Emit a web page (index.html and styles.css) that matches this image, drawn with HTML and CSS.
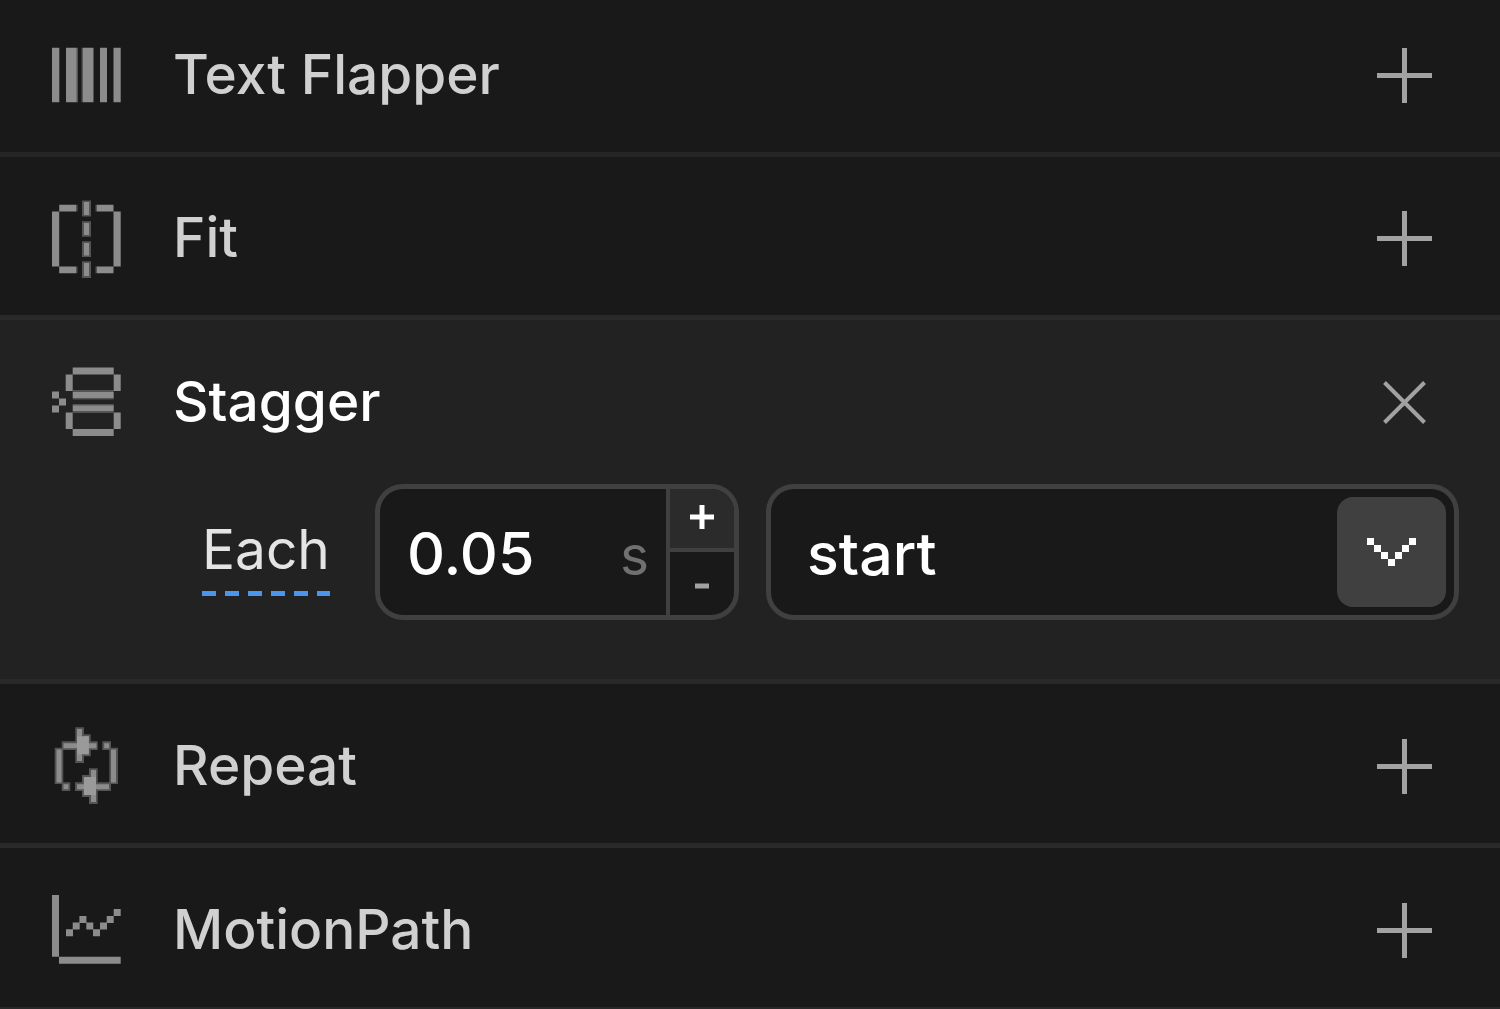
FILE: index.html
```html
<!DOCTYPE html>
<html lang="en">
<head>
<meta charset="utf-8">
<title>Effects</title>
<link rel="stylesheet" href="styles.css">
</head>
<body>
<main class="panel">
  <section class="row row-first">
    <header class="row-head">
      <svg class="icon" viewBox="0 0 80 80" aria-hidden="true">
        <path class="fringe" d="M30 12.7h2v54.6h-2zM35.5 12.7h2v54.6h-2z"/>
        <path d="M6 12.7h7.3v54.6H6zM20 12.7h10.5v54.6H20zM37 12.7h10.5v54.6H37zM54 12.7h7v54.6h-7zM67.5 12.7h7.2v54.6h-7.2z"/>
      </svg>
      <h2 class="title">Text Flapper</h2>
      <button class="action" type="button" aria-label="Add Text Flapper"><svg class="action-icon" viewBox="0 0 55 55"><path d="M0 27.5h55M27.5 0v55"/></svg></button>
    </header>
  </section>

  <section class="row">
    <header class="row-head">
      <svg class="icon" viewBox="0 0 80 80" aria-hidden="true">
        <path class="fringe" d="M36 1.5h9v16h-9zM36 22.3h9v15.4h-9zM36 42.3h9V58h-9zM36 62.3h9V79h-9zM30 5.8h1.5v6.8H30zM49.5 5.8H51v6.8h-1.5zM30 67.5h1.5v6.8H30zM49.5 67.5H51v6.8h-1.5z"/>
        <path d="M6 12.6h7.2v54.9H6zM67.5 12.6h7.2v54.9h-7.2zM13.2 5.8H30v6.8H13.2zM51 5.8h16.5v6.8H51zM13.2 67.5H30v6.8H13.2zM51 67.5h16.5v6.8H51zM38 3h5v13h-5zM38 24h5v12h-5zM38 44h5v12.5h-5zM38 64h5v13h-5z"/>
      </svg>
      <h2 class="title">Fit</h2>
      <button class="action" type="button" aria-label="Add Fit"><svg class="action-icon" viewBox="0 0 55 55"><path d="M0 27.5h55M27.5 0v55"/></svg></button>
    </header>
  </section>

  <section class="row row-active">
    <header class="row-head">
      <svg class="icon" viewBox="0 0 80 80" aria-hidden="true">
        <path class="fringe" d="M26.7 28h41v2h-41zM26.7 36h41v1.6h-41zM26.7 42h41v2h-41zM26.7 49h41v2h-41z"/>
        <path d="M26.7 5.5h41v7h-41zM19.7 12.5h7V29h-7zM67.7 12.5h7V29h-7zM26.7 30h41v6h-41zM26.7 43.5h41V49h-41zM19.7 50.5h7V67h-7zM67.7 50.5h7V67h-7zM26.7 67h41v7h-41zM6 29.5h7v7H6zM13 36.5h7v7h-7zM6 43.5h7v7H6z"/>
      </svg>
      <h2 class="title">Stagger</h2>
      <button class="action" type="button" aria-label="Remove Stagger"><svg class="action-icon" viewBox="0 0 55 55"><path class="cross" d="M7.5 7.5l40 40M47.5 7.5l-40 40"/></svg></button>
    </header>
    <div class="controls">
      <div class="label-cell"><label class="label" for="each">Each</label></div>
      <div class="number">
        <input class="number-input" id="each" type="text" inputmode="decimal" value="0.05">
        <span class="unit">s</span>
        <div class="stepper">
          <button class="step step-up" type="button" aria-label="Increase"><svg class="step-icon" viewBox="0 0 24 24"><path d="M0 12h24M12 0v24"/></svg></button>
          <button class="step step-down" type="button" aria-label="Decrease"><svg class="step-icon" viewBox="0 0 24 24"><path d="M5 14h14"/></svg></button>
        </div>
      </div>
      <div class="select">
        <select class="select-input" aria-label="Stagger from">
          <option>start</option>
          <option>center</option>
          <option>end</option>
        </select>
        <span class="select-arrow">
          <svg class="chevron" viewBox="0 0 50 28" aria-hidden="true"><path d="M0 0h7v7H0zM7 7h7v7H7zM14 14h7v7h-7zM21 21h7v7h-7zM28 14h7v7h-7zM35 7h7v7h-7zM42 0h7v7h-7z"/></svg>
        </span>
      </div>
    </div>
  </section>

  <section class="row">
    <header class="row-head">
      <svg class="icon" viewBox="0 0 80 80" aria-hidden="true">
        <path class="fringe" d="M8.7 21.7h8.6V58H8.7zM63.3 21.7H72V58h-8.7zM15.7 15.3h36v8.6h-36zM56.3 15.3H65v8.6h-8.7zM15.7 56.3h8.6V65h-8.6zM29 56.3h36V65H29zM29.3 1.3H38V37h-8.7zM36 8.3h8.7v22H36zM43 42.3h8.7V78H43zM36 49h8.7v22H36z"/>
        <path d="M10.5 23.5h5v33h-5zM65 23.5h5v33h-5zM17.5 17.2h33v5h-33zM58.2 17.2h5v5h-5zM17.5 58.2h5v5h-5zM31 58.2h32v5H31zM31 3h5v32h-5zM37.8 10.2h5v18h-5zM45 44h5v32h-5zM37.8 51h5v18h-5z"/>
        <path class="glow" d="M31 10.2h11.8v18H31zM38 51h12v18H38z"/>
      </svg>
      <h2 class="title">Repeat</h2>
      <button class="action" type="button" aria-label="Add Repeat"><svg class="action-icon" viewBox="0 0 55 55"><path d="M0 27.5h55M27.5 0v55"/></svg></button>
    </header>
  </section>

  <section class="row row-last">
    <header class="row-head">
      <svg class="icon" viewBox="0 0 80 80" aria-hidden="true">
        <path d="M6 5h7v61.7H6zM13 66.7h61.7v7H13zM20 39.3h7v7h-7zM26.7 32.6h7v7h-7zM33.4 26h7v7h-7zM40.3 32.6h7v7h-7zM47 39.3h7v7h-7zM54 32.6h7v7h-7zM60.7 26h7v7h-7zM67.7 19h7v7h-7z"/>
      </svg>
      <h2 class="title">MotionPath</h2>
      <button class="action" type="button" aria-label="Add MotionPath"><svg class="action-icon" viewBox="0 0 55 55"><path d="M0 27.5h55M27.5 0v55"/></svg></button>
    </header>
  </section>
</main>
</body>
</html>
```
FILE: styles.css
```css
* { box-sizing: border-box; }

body {
  margin: 0;
  background: #191919;
  color: #d0d0d0;
  font-family: Inter, "Liberation Sans", sans-serif;
  font-size: 55px;
  line-height: 64px;
}

button, input, select {
  margin: 0;
  padding: 0;
  border: 0;
  background: none;
  color: inherit;
  font: inherit;
}

.row { border-bottom: 5px solid #292929; }
.row-first { border-bottom-color: #252525; }
.row-last { border-bottom-width: 2px; }

.row-head {
  display: flex;
  align-items: center;
  height: 159px;
  padding: 5px 68px 0 46px;
}
.row-first .row-head { height: 152px; padding: 0 68px 2px 46px; }
.row-first + .row .row-head { height: 158px; }

.icon {
  flex: none;
  width: 80px;
  height: 80px;
  fill: #8c8c8c;
}
.fringe { fill: #545454; }
.glow { fill: #9a9a9a; }

.title {
  flex: 1;
  margin: 0 0 0 47px;
  padding-bottom: 3px;
  font-size: 55px;
  font-weight: 500;
}

.action { display: flex; cursor: pointer; }
.action-icon {
  width: 55px;
  height: 55px;
  stroke: #a2a2a2;
  stroke-width: 5;
}
.cross { stroke-width: 4; }

.row-active { background: #222222; }
.row-active .title { color: #ffffff; }

.controls {
  display: flex;
  padding: 5px 41px 59px 202px;
}

.label-cell {
  flex: none;
  width: 173px;
  padding-top: 33px;
}
.label {
  display: inline-block;
  height: 79px;
  color: #e4e4e4;
  background: repeating-linear-gradient(90deg, #4a96ec 0 14px, transparent 14px 23px) left bottom / 100% 5px no-repeat;
}

.number, .select {
  display: flex;
  height: 136px;
  border: 5px solid #404040;
  border-radius: 28px;
  background: #191919;
  color: #ffffff;
  font-size: 59px;
  font-weight: 500;
  overflow: hidden;
}

.number {
  flex: none;
  align-items: center;
  width: 364px;
  margin-right: 27px;
}
.number-input {
  flex: 1;
  min-width: 0;
  height: 100%;
  padding: 3px 0 0 27px;
  outline: 0;
}
.unit {
  padding: 6px 17px 0 0;
  color: #707070;
  font-size: 55px;
  font-weight: 400;
}
.stepper {
  display: flex;
  flex-direction: column;
  width: 68px;
  height: 100%;
  border-left: 4px solid #404040;
}
.step {
  display: flex;
  flex: 1;
  align-items: center;
  justify-content: center;
}
.step-up {
  flex: none;
  height: 63px;
  padding-bottom: 4px;
  border-bottom: 4px solid #404040;
  background: #2b2b2b;
}
.step-icon {
  width: 24px;
  height: 24px;
  stroke: #ffffff;
  stroke-width: 5;
}
.step-down .step-icon { stroke: #a2a2a2; }

.select {
  position: relative;
  flex: 1;
}
.select-input {
  flex: 1;
  height: 100%;
  padding: 3px 0 0 36px;
  outline: 0;
  appearance: none;
}
.select-arrow {
  position: absolute;
  top: 8px;
  right: 8px;
  display: flex;
  align-items: center;
  justify-content: center;
  width: 109px;
  height: 110px;
  border-radius: 16px;
  background: #404040;
  pointer-events: none;
}
.chevron {
  width: 50px;
  height: 28px;
  fill: #ffffff;
}
```
